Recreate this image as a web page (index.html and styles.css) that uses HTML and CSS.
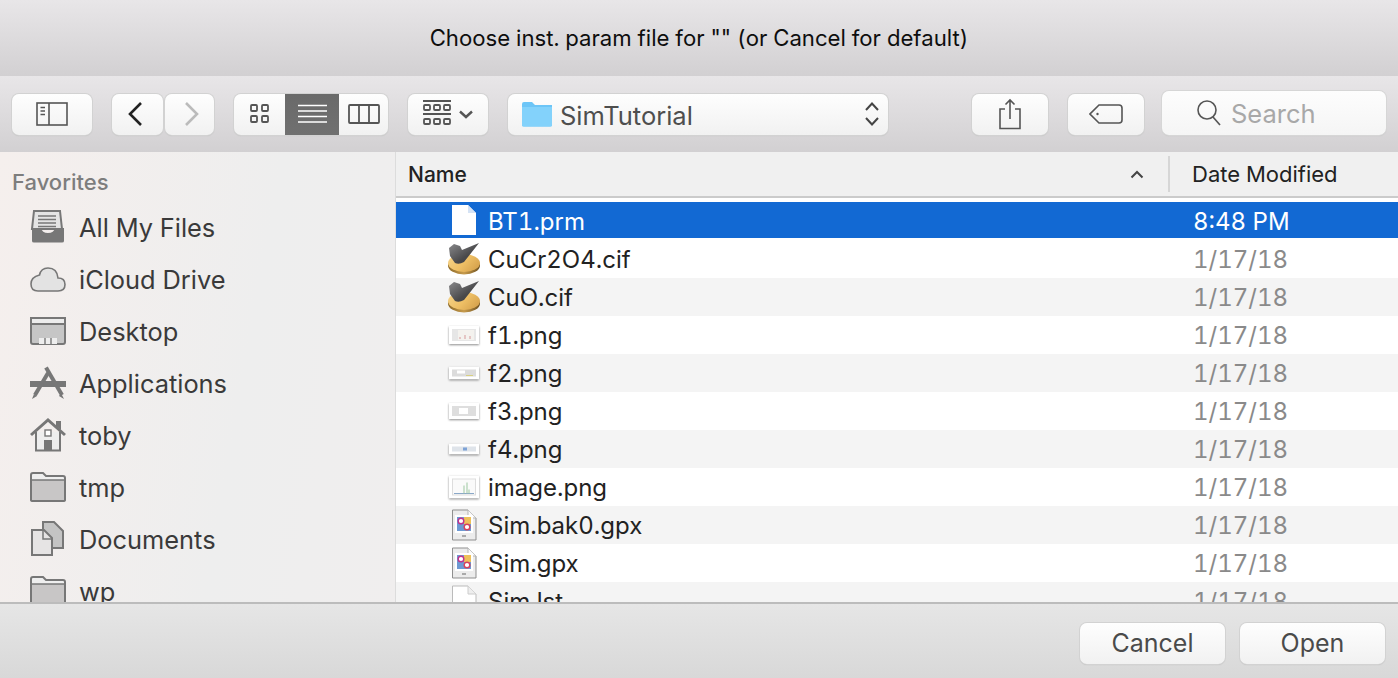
FILE: index.html
```html
<!DOCTYPE html>
<html lang="en">
<head>
<meta charset="utf-8">
<title>Choose inst. param file</title>
<link rel="stylesheet" href="styles.css">
</head>
<body>
<svg class="defs" width="0" height="0">
  <defs>
    <linearGradient id="gold" x1="0" y1="0" x2="1" y2="0.500">
      <stop offset="0" stop-color="#f6d58c"/>
      <stop offset="0.600" stop-color="#eebf65"/>
      <stop offset="1" stop-color="#d9a650"/>
    </linearGradient>
    <linearGradient id="rim" x1="0" y1="0" x2="1" y2="0">
      <stop offset="0" stop-color="#8d6a2a"/>
      <stop offset="0.500" stop-color="#c79b4c"/>
      <stop offset="1" stop-color="#6e5120"/>
    </linearGradient>
    <linearGradient id="check" x1="0" y1="0" x2="1" y2="1">
      <stop offset="0" stop-color="#8b8b8d"/>
      <stop offset="0.600" stop-color="#49494b"/>
      <stop offset="1" stop-color="#3a3a3c"/>
    </linearGradient>
    <symbol id="coin" viewBox="0 0 34 32">
      <ellipse cx="17" cy="22.500" rx="16" ry="9" fill="url(#rim)"/>
      <ellipse cx="17" cy="20" rx="16" ry="9" fill="url(#gold)"/>
      <path d="M2 5 L7 1 L13 3 L15 7 L32 0 L17 19 Q12 22 8 20 L3 13 Z" fill="url(#check)"/>
    </symbol>
    <symbol id="gpx" viewBox="0 0 26 32">
      <path d="M1.500 1 H17 L25 9 V31 H1.500 Z" fill="#ececec" stroke="#8f8f8f"/>
      <path d="M17 1 V9 H25" fill="#fafafa" stroke="#b5b5b5"/>
      <rect x="4" y="6" width="18" height="18" fill="#fff"/>
      <rect x="6" y="8" width="14" height="14" fill="#6d99d2"/>
      <rect x="13" y="8" width="7" height="7" fill="#eec05a"/>
      <circle cx="10" cy="12" r="2.800" fill="#fff" stroke="#c2328c" stroke-width="1.400"/>
      <circle cx="16" cy="18" r="2.800" fill="#fff" stroke="#d8405a" stroke-width="1.400"/>
      <rect x="11" y="26" width="4" height="2" fill="#aaa"/>
    </symbol>
  </defs>
</svg>
<main class="dialog">
  <header class="titlebar">Choose inst. param file for "" (or Cancel for default)</header>

  <nav class="toolbar">
    <button class="btn btn-sidebar" type="button" aria-label="Sidebar">
      <svg width="32" height="24" viewBox="0 0 32 24" fill="none" stroke="#555" stroke-width="1.600"><rect x="1" y="1" width="30" height="22"/><path d="M13 1V23"/><path d="M4.500 5.500H9M4.500 9H9M4.500 12.500H9"/></svg>
    </button>
    <div class="nav-pair">
      <button class="btn btn-back" type="button" aria-label="Back">
        <svg class="chev-back" width="16" height="26" viewBox="0 0 16 26" fill="none" stroke="#222" stroke-width="2.600"><path d="M14 2 L3 13 L14 24"/></svg>
      </button>
      <button class="btn btn-forward" type="button" aria-label="Forward">
        <svg width="16" height="26" viewBox="0 0 16 26" fill="none" stroke="#bbb" stroke-width="2.600"><path d="M2 2 L13 13 L2 24"/></svg>
      </button>
    </div>
    <div class="segments">
      <button class="seg seg-icon" type="button" aria-label="Icons">
        <svg width="20" height="20" viewBox="0 0 20 20" fill="none" stroke="#555" stroke-width="1.800"><rect x="1" y="1" width="6" height="6" rx="1"/><rect x="12" y="1" width="6" height="6" rx="1"/><rect x="1" y="12" width="6" height="6" rx="1"/><rect x="12" y="12" width="6" height="6" rx="1"/></svg>
      </button>
      <button class="seg seg-list" type="button" aria-label="List">
        <svg width="29" height="20" viewBox="0 0 29 20" fill="none" stroke="#fff" stroke-width="1.600"><path d="M0 1.500H29M0 7H29M0 12.500H29M0 18H29"/></svg>
      </button>
      <button class="seg seg-col" type="button" aria-label="Columns">
        <svg width="32" height="20" viewBox="0 0 32 20" fill="none" stroke="#555" stroke-width="1.800"><rect x="1" y="1" width="30" height="18" rx="1"/><path d="M11 1V19M21 1V19"/></svg>
      </button>
    </div>
    <button class="btn btn-arrange" type="button" aria-label="Arrange">
      <svg width="28" height="28" viewBox="0 0 28 28" fill="none" stroke="#555" stroke-width="1.800"><path d="M0 1H28M0 14H28"/><rect x="1" y="5" width="6" height="5" rx="1"/><rect x="11" y="5" width="6" height="5" rx="1"/><rect x="21" y="5" width="6" height="5" rx="1"/><rect x="1" y="19" width="6" height="5" rx="1"/><rect x="11" y="19" width="6" height="5" rx="1"/><rect x="21" y="19" width="6" height="5" rx="1"/></svg>
      <svg width="14" height="9" viewBox="0 0 14 9" fill="none" stroke="#555" stroke-width="2.400"><path d="M1 1.500 L7 7 L13 1.500"/></svg>
    </button>
    <button class="btn btn-path" type="button">
      <svg width="32" height="26" viewBox="0 0 32 26"><path d="M1 3 Q1 1 3 1 H11 L14 4 H31 V24 Q31 25.500 29 25.500 H3 Q1 25.500 1 24 Z" fill="#6cc5f7"/><path d="M1 6 H31 V24 Q31 25.500 29 25.500 H3 Q1 25.500 1 24 Z" fill="#83d2fb"/></svg>
      <span class="path-name">SimTutorial</span>
      <svg class="updown" width="16" height="26" viewBox="0 0 16 26" fill="none" stroke="#444" stroke-width="2"><path d="M2 9 L8 2.500 L14 9M2 17 L8 23.500 L14 17"/></svg>
    </button>
    <button class="btn btn-share" type="button" aria-label="Share">
      <svg width="24" height="32" viewBox="0 0 24 32" fill="none" stroke="#555" stroke-width="1.600"><path d="M7 11H2V30.500H22V11H17M12 21V2M7.500 6.500 L12 2 L16.500 6.500"/></svg>
    </button>
    <button class="btn btn-tag" type="button" aria-label="Tag">
      <svg width="34" height="20" viewBox="0 0 34 20" fill="none" stroke="#555" stroke-width="1.600"><path d="M10 1H30Q33 1 33 4V16Q33 19 30 19H10L1 10Z"/><circle cx="8.500" cy="10" r="1.200" fill="#555" stroke="none"/></svg>
    </button>
    <div class="search">
      <svg width="26" height="28" viewBox="0 0 26 28" fill="none" stroke="#555" stroke-width="1.600"><circle cx="11" cy="11" r="9"/><path d="M17 18 L24 26"/></svg>
      <span class="search-text">Search</span>
    </div>
  </nav>

  <div class="content">
    <aside class="sidebar">
      <h2 class="sidebar-title">Favorites</h2>
      <ul class="places">
        <li class="place">
          <svg class="place-icon" width="36" height="34" viewBox="0 0 36 34"><path d="M4 1H30L32 19H2Z" fill="#e4e4e4" stroke="#777" stroke-width="2"/><path d="M8 6H26M8 9.500H26M8 13H26M8 16.500H26" stroke="#777" stroke-width="1.400"/><path d="M2 18H11Q12 23 18 23Q24 23 25 18H34V31Q34 32.500 32 32.500H4Q2 32.500 2 31Z" fill="#777"/></svg>
          <span>All My Files</span>
        </li>
        <li class="place">
          <svg class="place-icon" width="36" height="26" viewBox="0 0 36 26"><path d="M8 25H28Q35 25 35 18.500Q35 12 28 12Q27 2 18 2Q11 2 9.500 9Q1 11 1 18Q1 25 8 25Z" fill="#e3e3e3" stroke="#777" stroke-width="1.600"/></svg>
          <span>iCloud Drive</span>
        </li>
        <li class="place">
          <svg class="place-icon" width="36" height="28" viewBox="0 0 36 28"><rect x="1" y="1" width="34" height="26" rx="2" fill="#c6c6c6" stroke="#777" stroke-width="2"/><rect x="1" y="1" width="34" height="6" fill="#ececec" stroke="#777" stroke-width="2"/><path d="M9 27V21H27V27Z" fill="#eee"/><path d="M15 21V27M21 21V27" stroke="#777" stroke-width="1.400"/></svg>
          <span>Desktop</span>
        </li>
        <li class="place">
          <svg class="place-icon" width="36" height="34" viewBox="0 0 36 34"><path d="M0 15H11M24 15H36V21H0V15Z" fill="#777"/><path d="M16 1.500 L32 29" stroke="#777" stroke-width="4" fill="none"/><path d="M31 27 L34 33 L29 30 Z" fill="#777"/><path d="M18 7 L5 29" stroke="#777" stroke-width="4" fill="none"/><path d="M4 28 L2 33 L7 30 Z" fill="#777"/></svg>
          <span>Applications</span>
        </li>
        <li class="place">
          <svg class="place-icon" width="36" height="34" viewBox="0 0 36 34"><path d="M6 14V32.500H30V14" fill="#eee" stroke="#777" stroke-width="2"/><path d="M1 17 L18 2 L35 17" fill="none" stroke="#777" stroke-width="3"/><path d="M26 3H31V12L26 8Z" fill="#777"/><rect x="15" y="12" width="6" height="6" fill="#fff" stroke="#777" stroke-width="1.400"/><rect x="14" y="22" width="8" height="11" fill="#777"/></svg>
          <span>toby</span>
        </li>
        <li class="place">
          <svg class="place-icon" width="36" height="30" viewBox="0 0 36 30"><path d="M1 3Q1 1 3 1H13L16 4H33Q35 4 35 6V28Q35 29 33 29H3Q1 29 1 28Z" fill="#efefef" stroke="#777" stroke-width="2"/><path d="M2 8H34V28H2Z" fill="#c8c6c6"/><path d="M1 8H35" stroke="#777" stroke-width="1.500"/></svg>
          <span>tmp</span>
        </li>
        <li class="place">
          <svg class="place-icon" width="36" height="36" viewBox="0 0 36 36"><path d="M13 1H24L33 10V27H13Z" fill="#c4c4c4" stroke="#777" stroke-width="2"/><path d="M2 9H14L22 17V34H2Z" fill="#e6e4e4" stroke="#777" stroke-width="2"/><path d="M13 9V18H22" fill="none" stroke="#777" stroke-width="1.500"/></svg>
          <span>Documents</span>
        </li>
        <li class="place">
          <svg class="place-icon" width="36" height="30" viewBox="0 0 36 30"><path d="M1 3Q1 1 3 1H13L16 4H33Q35 4 35 6V28Q35 29 33 29H3Q1 29 1 28Z" fill="#efefef" stroke="#777" stroke-width="2"/><path d="M2 8H34V28H2Z" fill="#c8c6c6"/><path d="M1 8H35" stroke="#777" stroke-width="1.500"/></svg>
          <span>wp</span>
        </li>
      </ul>
    </aside>

    <section class="files">
      <div class="columns">
        <div class="col-name">Name
          <svg width="14" height="9" viewBox="0 0 14 9" fill="none" stroke="#444" stroke-width="2"><path d="M1.500 7.500 L7 2 L12.500 7.500"/></svg>
        </div>
        <div class="col-date">Date Modified</div>
      </div>
      <ul class="rows">
        <li class="row row-selected">
          <svg class="file-icon" width="26" height="32" viewBox="0 0 26 32"><path d="M1 1H17L25 9V31H1Z" fill="#fff"/><path d="M17 1V9H25" fill="#d5e3f5"/></svg>
          <span class="file-name">BT1.prm</span><span class="file-date">8:48 PM</span>
        </li>
        <li class="row">
          <svg class="file-icon" width="34" height="32"><use href="#coin"/></svg>
          <span class="file-name">CuCr2O4.cif</span><span class="file-date">1/17/18</span>
        </li>
        <li class="row row-alt">
          <svg class="file-icon" width="34" height="32"><use href="#coin"/></svg>
          <span class="file-name">CuO.cif</span><span class="file-date">1/17/18</span>
        </li>
        <li class="row">
          <svg class="file-icon thumb" width="30" height="18" viewBox="0 0 30 18"><rect width="30" height="18" fill="#fff"/><rect x="3" y="3" width="24" height="12" fill="#e6e6e6"/><rect x="9" y="4" width="16" height="10" fill="#f4f2ee"/><path d="M11 11V13M16 9V13M21 10V13" stroke="#d69a9a"/></svg>
          <span class="file-name">f1.png</span><span class="file-date">1/17/18</span>
        </li>
        <li class="row row-alt">
          <svg class="file-icon thumb" width="30" height="13" viewBox="0 0 30 13"><rect width="30" height="13" fill="#fff"/><rect x="3" y="3" width="24" height="7" fill="#dcdcdc"/><rect x="8" y="4" width="8" height="3" fill="#fff"/><path d="M17 9H24" stroke="#d8cf80"/></svg>
          <span class="file-name">f2.png</span><span class="file-date">1/17/18</span>
        </li>
        <li class="row">
          <svg class="file-icon thumb" width="30" height="16" viewBox="0 0 30 16"><rect width="30" height="16" fill="#fff"/><rect x="3" y="3" width="24" height="10" fill="#dedede"/><rect x="10" y="5" width="9" height="6" fill="#fff"/></svg>
          <span class="file-name">f3.png</span><span class="file-date">1/17/18</span>
        </li>
        <li class="row row-alt">
          <svg class="file-icon thumb" width="30" height="11" viewBox="0 0 30 11"><rect width="30" height="11" fill="#fff"/><rect x="3" y="3" width="24" height="5" fill="#dfe4ea"/><rect x="14" y="4" width="4" height="3" fill="#7da2d6"/></svg>
          <span class="file-name">f4.png</span><span class="file-date">1/17/18</span>
        </li>
        <li class="row">
          <svg class="file-icon thumb" width="30" height="23" viewBox="0 0 30 23"><rect width="30" height="23" fill="#fff"/><rect x="3.500" y="3.500" width="23" height="16" fill="#fafafa" stroke="#ddd"/><path d="M5 18H25" stroke="#8aa8c8"/><path d="M15 18V10M18 18V7M20 18V14" stroke="#9cc8a0"/></svg>
          <span class="file-name">image.png</span><span class="file-date">1/17/18</span>
        </li>
        <li class="row row-alt">
          <svg class="file-icon" width="26" height="32"><use href="#gpx"/></svg>
          <span class="file-name">Sim.bak0.gpx</span><span class="file-date">1/17/18</span>
        </li>
        <li class="row">
          <svg class="file-icon" width="26" height="32"><use href="#gpx"/></svg>
          <span class="file-name">Sim.gpx</span><span class="file-date">1/17/18</span>
        </li>
        <li class="row row-alt">
          <svg class="file-icon" width="26" height="32" viewBox="0 0 26 32"><path d="M1.500 1H17L25 9V31H1.500Z" fill="#fff" stroke="#bbb"/><path d="M17 1V9H25" fill="#eee" stroke="#ccc"/></svg>
          <span class="file-name">Sim.lst</span><span class="file-date">1/17/18</span>
        </li>
      </ul>
    </section>
  </div>

  <footer class="footer">
    <button class="btn btn-action" type="button">Cancel</button>
    <button class="btn btn-action" type="button">Open</button>
  </footer>
</main>
</body>
</html>
```

FILE: styles.css
```css
* { box-sizing: border-box; }

html, body {
  margin: 0;
  padding: 0;
  height: 100%;
  overflow: hidden;
}

body {
  font-family: Inter, "Liberation Sans", sans-serif;
  font-variant-numeric: tabular-nums;
  color: #262626;
  background: #e0e0e0;
}

.defs { position: absolute; }

.dialog {
  display: flex;
  flex-direction: column;
  width: 1398px;
  height: 678px;
}

.titlebar {
  flex: 0 0 76px;
  display: flex;
  align-items: center;
  justify-content: center;
  font-size: 22.150px;
  color: #0e0e0e;
  background: linear-gradient(#e8e6e8, #d2d0d2);
}

.toolbar {
  flex: 0 0 76px;
  display: flex;
  align-items: center;
  padding: 0 12px;
  background: linear-gradient(#e8e6e8, #d2d0d2);
}

.btn, .seg {
  display: flex;
  align-items: center;
  justify-content: center;
  padding: 0;
  font: inherit;
  border: 0;
  background: transparent;
}

.btn {
  height: 41px;
  border-radius: 7px;
  background: linear-gradient(#fefefe, #f1f1f1);
  box-shadow: 0 0 0 1px #d2d2d2, 0 1px 1px #b4b4b4;
}

.btn-sidebar { width: 80px; }

.nav-pair {
  display: flex;
  gap: 2px;
  margin-left: 20px;
}

.btn-back { width: 51px; padding-right: 5px; }
.btn-forward { width: 49px; padding-left: 4px; }

.segments {
  display: flex;
  height: 41px;
  margin-left: 20px;
  border-radius: 7px;
  overflow: hidden;
  background: linear-gradient(#fefefe, #f1f1f1);
  box-shadow: 0 0 0 1px #d2d2d2, 0 1px 1px #b4b4b4;
}

.seg-icon { width: 51px; }
.seg-list { width: 54px; background: linear-gradient(#6a6a6a, #707070); }
.seg-col { width: 49px; }

.btn-arrange {
  width: 80px;
  gap: 8px;
  margin-left: 20px;
}

.btn-path {
  width: 380px;
  justify-content: flex-start;
  margin-left: 20px;
  padding: 0 8px 0 13px;
  font-size: 25.500px;
  color: #4e4e4e;
}

.path-name {
  margin-left: 7px;
  padding-top: 2px;
}

.updown { margin-left: auto; }

.btn-share {
  width: 76px;
  margin-left: 84px;
}

.btn-tag {
  width: 76px;
  margin-left: 20px;
}

.search {
  display: flex;
  align-items: center;
  gap: 9px;
  width: 224px;
  height: 44px;
  margin-left: 18px;
  margin-top: -3px;
  padding-left: 34px;
  font-size: 25.500px;
  color: #a8a8a8;
  border-radius: 7px;
  background: linear-gradient(#fdfdfd, #f5f5f5);
  box-shadow: 0 0 0 1px #d6d6d6, 0 1px 1px #b4b4b4;
}

.search-text { padding-top: 2px; }

.content {
  flex: 0 0 450px;
  display: flex;
  overflow: hidden;
}

.sidebar {
  flex: 0 0 396px;
  padding: 18px 0 0 12px;
  border-right: 1px solid #dcdcdc;
  background: linear-gradient(100deg, #f5efed, #eeeeee 60%, #f0eeee);
}

.sidebar-title {
  margin: 0 0 7px;
  font-size: 22px;
  line-height: 24px;
  font-weight: 500;
  color: #7d7d7d;
}

.places {
  margin: 0;
  padding: 0;
  list-style: none;
}

.place {
  position: relative;
  display: flex;
  align-items: center;
  height: 52px;
  padding-left: 67px;
  font-size: 25.400px;
  color: #3a3a3a;
}

.place-icon {
  position: absolute;
  left: 18px;
  top: 50%;
  transform: translateY(-50%);
}

.files {
  flex: 1;
  display: flex;
  flex-direction: column;
  background: #fff;
}

.columns {
  flex: 0 0 46px;
  display: flex;
  align-items: center;
  font-size: 21px;
  font-weight: 500;
  color: #222;
  background: #f0f0f0;
  border-bottom: 2px solid #cbcbcb;
}

.col-name {
  display: flex;
  align-items: center;
  justify-content: space-between;
  width: 774px;
  height: 36px;
  padding: 0 24px 0 12px;
  border-right: 2px solid #d6d6d6;
}

.col-date {
  padding-left: 22px;
  font-size: 22px;
  font-weight: 400;
}

.rows {
  margin: 4px 0 0;
  padding: 0;
  list-style: none;
}

.row {
  position: relative;
  display: flex;
  align-items: center;
  height: 38px;
  padding-left: 92px;
  font-size: 24px;
  color: #222;
  background: #fff;
}

.row-alt { background: #f4f4f4; }

.row-selected {
  height: 36px;
  margin-bottom: 2px;
  color: #fff;
  background: #1269d3;
}

.row-selected span { padding-top: 2px; }

.file-icon {
  position: absolute;
  left: 68px;
  top: 50%;
  transform: translate(-50%, -50%);
}

.thumb {
  filter: drop-shadow(0 1px 1px rgba(0, 0, 0, 0.45));
}

.file-name { flex: 1; }

.file-date {
  width: 205px;
  color: #8a8a8a;
}

.row-selected .file-date { color: #fff; }

.footer {
  flex: 1;
  display: flex;
  align-items: center;
  justify-content: flex-end;
  gap: 15px;
  padding: 4px 13px 0 0;
  border-top: 2px solid #bcbcbc;
  background: linear-gradient(#e6e6e6, #d8d8d8);
}

.btn-action {
  width: 145px;
  font-size: 25px;
  color: #4a4a4a;
}
```
